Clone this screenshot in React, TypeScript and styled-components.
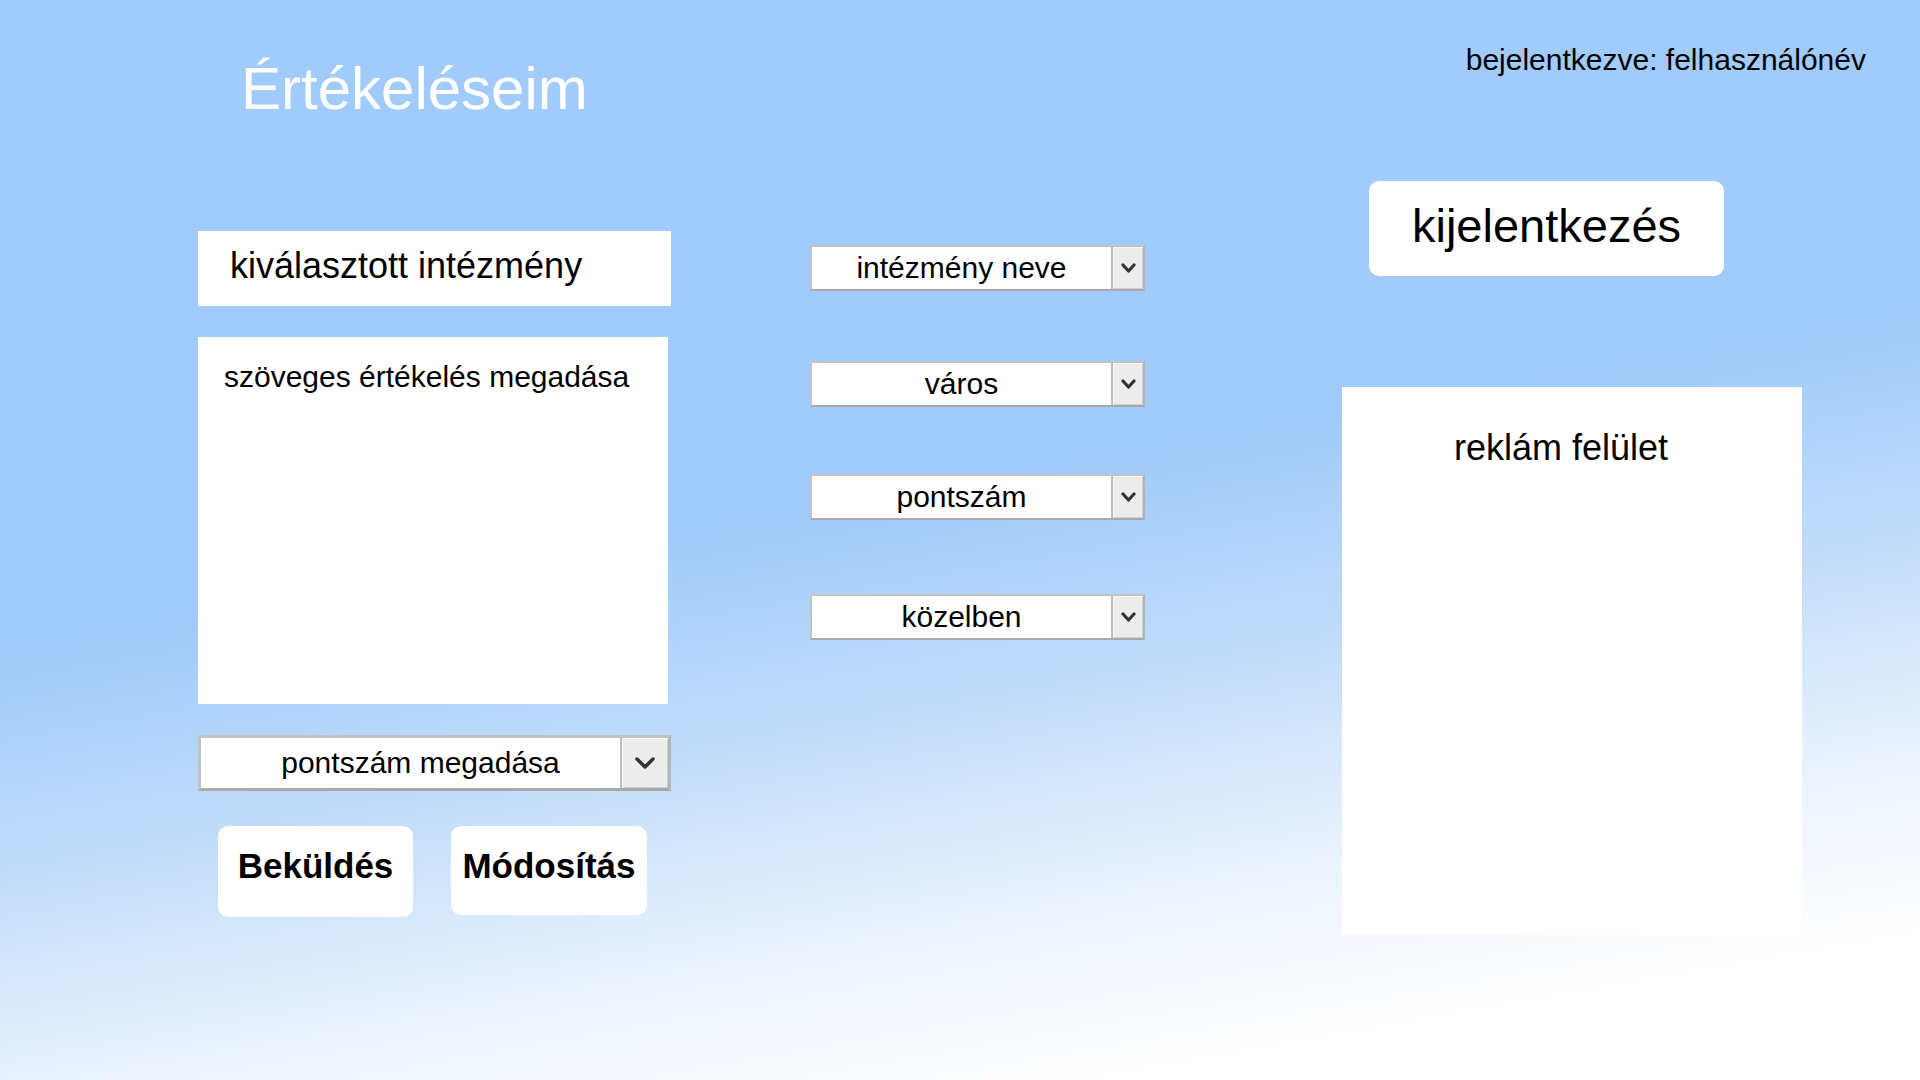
import React from "react";
import styled, { createGlobalStyle } from "styled-components";

const GlobalStyle = createGlobalStyle`
  html, body { margin: 0; padding: 0; }
  body { font-family: "Liberation Sans", Arial, sans-serif; color: #000; }
  * { box-sizing: border-box; }
`;

const Page = styled.div`
  width: 100%;
  min-height: 100vh;
  background: linear-gradient(170deg, #a1cbfb 0%, #a1cbfb 46%, #c2ddfb 62%, #edf4fe 78%, #ffffff 90%);
  display: flex;
  flex-direction: column;
`;

const Header = styled.header`
  height: 181px;
  display: flex;
  justify-content: space-between;
  align-items: flex-start;
  padding: 43px 54px 0 241px;
`;

const Title = styled.h1`
  margin: 11px 0 0;
  font-size: 60px;
  font-weight: 400;
  line-height: 1.15;
  color: #ffffff;
`;

const LoginStatus = styled.div`
  font-size: 30px;
  line-height: 1.15;
`;

const Main = styled.main`
  display: grid;
  grid-template-columns: 473px 335px 518px;
  column-gap: 139px;
  padding-left: 198px;
  align-items: start;
`;

const LeftColumn = styled.section`
  display: flex;
  flex-direction: column;
  gap: 31px;
  padding-top: 50px;
`;

const MiddleColumn = styled.section`
  display: flex;
  flex-direction: column;
  padding-top: 64px;
`;

const RightColumn = styled.aside`
  display: flex;
  flex-direction: column;
  padding-left: 58px;
`;

const SelectedBox = styled.div`
  height: 75px;
  background: #ffffff;
  padding: 14px 0 0 32px;
  font-size: 36px;
  line-height: 1.15;
`;

const ReviewArea = styled.div`
  width: 470px;
  height: 367px;
  background: #ffffff;
  padding: 23px 0 0 26px;
  font-size: 30px;
  line-height: 1.15;
`;

const SelectBox = styled.div<{ $big?: boolean; $top?: number }>`
  display: flex;
  height: ${(p) => (p.$big ? 56 : 46)}px;
  margin-top: ${(p) => p.$top ?? 0}px;
  background: #ffffff;
  border: ${(p) => (p.$big ? 3 : 2)}px solid #c2c2c2;
  border-bottom-color: #a9a9a9;
  border-right-color: #b4b4b4;
`;

const SelectText = styled.div<{ $shift?: number }>`
  flex: 1;
  display: flex;
  align-items: center;
  justify-content: center;
  padding-left: ${(p) => p.$shift ?? 0}px;
  font-size: 30px;
  line-height: 1.15;
`;

const ArrowBox = styled.div<{ $big?: boolean }>`
  width: ${(p) => (p.$big ? 48 : 32)}px;
  display: flex;
  align-items: center;
  justify-content: center;
  background: #ededed;
  border-left: 2px solid #bcbcbc;
  box-shadow: inset 1px 1px 0 #f8f8f8, inset -1px -1px 0 #d0d0d0;
`;

const ButtonRow = styled.div`
  display: flex;
  align-items: flex-start;
  gap: 38px;
  padding-left: 20px;
  margin-top: 4px;
`;

const ActionButton = styled.button<{ $w: number; $h: number }>`
  width: ${(p) => p.$w}px;
  height: ${(p) => p.$h}px;
  border: none;
  border-radius: 10px;
  background: #ffffff;
  padding: 20px 0 0;
  display: flex;
  justify-content: center;
  align-items: flex-start;
  font-family: "Liberation Sans", Arial, sans-serif;
  font-size: 35px;
  font-weight: 700;
  line-height: 1.15;
  color: #000;
`;

const LogoutButton = styled.button`
  margin-left: 27px;
  width: 355px;
  height: 95px;
  border: none;
  border-radius: 10px;
  background: #ffffff;
  padding: 18px 0 0;
  display: flex;
  justify-content: center;
  align-items: flex-start;
  font-family: "Liberation Sans", Arial, sans-serif;
  font-size: 47px;
  line-height: 1.15;
  color: #000;
`;

const AdPanel = styled.div`
  margin-top: 111px;
  width: 460px;
  height: 548px;
  background: #ffffff;
  padding: 40px 22px 0 0;
  text-align: center;
  font-size: 36px;
  line-height: 1.15;
`;

const Chevron = ({ big }: { big?: boolean }) => {
  const w = big ? 20 : 15;
  const h = big ? 12 : 10;
  return (
    <svg width={w} height={h} viewBox={`0 0 ${w} ${h}`} fill="none">
      <polyline
        points={`2,2 ${w / 2},${h - 2} ${w - 2},2`}
        stroke="#333"
        strokeWidth={big ? 3.5 : 3.2}
        strokeLinecap="round"
        strokeLinejoin="round"
      />
    </svg>
  );
};

const Dropdown = ({
  label,
  big,
  shift,
  top,
}: {
  label: string;
  big?: boolean;
  shift?: number;
  top?: number;
}) => (
  <SelectBox $big={big} $top={top}>
    <SelectText $shift={shift}>{label}</SelectText>
    <ArrowBox $big={big}>
      <Chevron big={big} />
    </ArrowBox>
  </SelectBox>
);

const filters = [
  { label: "intézmény neve", top: 0 },
  { label: "város", top: 70 },
  { label: "pontszám", top: 67 },
  { label: "közelben", top: 74 },
];

export default function App() {
  return (
    <>
      <GlobalStyle />
      <Page>
        <Header>
          <Title>Értékeléseim</Title>
          <LoginStatus>bejelentkezve: felhasználónév</LoginStatus>
        </Header>
        <Main>
          <LeftColumn>
            <SelectedBox>kiválasztott intézmény</SelectedBox>
            <ReviewArea>szöveges értékelés megadása</ReviewArea>
            <Dropdown label="pontszám megadása" big shift={20} />
            <ButtonRow>
              <ActionButton $w={195} $h={91}>Beküldés</ActionButton>
              <ActionButton $w={196} $h={89}>Módosítás</ActionButton>
            </ButtonRow>
          </LeftColumn>
          <MiddleColumn>
            {filters.map((f) => (
              <Dropdown key={f.label} label={f.label} top={f.top} />
            ))}
          </MiddleColumn>
          <RightColumn>
            <LogoutButton>kijelentkezés</LogoutButton>
            <AdPanel>reklám felület</AdPanel>
          </RightColumn>
        </Main>
      </Page>
    </>
  );
}
